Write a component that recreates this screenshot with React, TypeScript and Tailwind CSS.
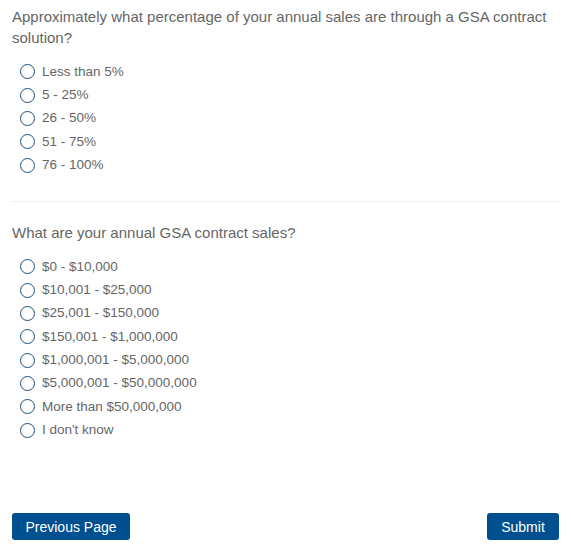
const q1 = ['Less than 5%', '5 - 25%', '26 - 50%', '51 - 75%', '76 - 100%']

const q2 = [
  '$0 - $10,000',
  '$10,001 - $25,000',
  '$25,001 - $150,000',
  '$150,001 - $1,000,000',
  '$1,000,001 - $5,000,000',
  '$5,000,001 - $50,000,000',
  'More than $50,000,000',
  "I don't know",
]

function Options({ name, items }: { name: string; items: string[] }) {
  return (
    <div className="mt-[12px] flex flex-col pl-2">
      {items.map((label) => (
        <label key={label} className="flex h-[23.4px] items-center gap-[7px] text-[13.5px] text-[#666]">
          <span className="h-[15px] w-[15px] shrink-0 rounded-full border-[1.5px] border-[#1d4f7c]" />
          <input type="radio" name={name} className="hidden" />
          {label}
        </label>
      ))}
    </div>
  )
}

export default function App() {
  return (
    <div className="flex h-[549px] w-[571px] flex-col bg-white px-3 pt-[6px] pb-[9px] font-['Liberation_Sans',Arial,sans-serif]">
      <p className="text-[15px] leading-[21px] text-[#666]">
        Approximately what percentage of your annual sales are through a GSA contract solution?
      </p>
      <Options name="pct" items={q1} />

      <div className="mt-[24px] h-px bg-[#eee]" />

      <p className="mt-[20px] text-[15px] leading-[21px] text-[#666]">What are your annual GSA contract sales?</p>
      <Options name="sales" items={q2} />

      <div className="mt-auto flex items-center justify-between">
        <button type="button" className="h-[27px] w-[118px] rounded-[3px] bg-[#00508f] pt-px text-[14px] text-white">
          Previous Page
        </button>
        <button type="button" className="h-[27px] w-[72px] rounded-[3px] bg-[#00508f] pt-px text-[14px] text-white">
          Submit
        </button>
      </div>
    </div>
  )
}
